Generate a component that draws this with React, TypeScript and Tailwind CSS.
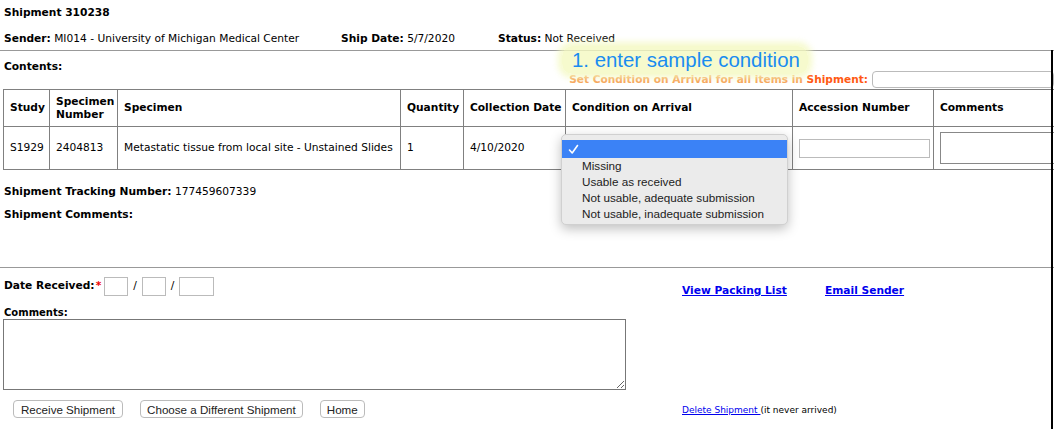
import React from "react";

const cell = "border border-[#808080] px-[6px] align-middle";

export default function App() {
  return (
    <div className="relative w-[1054px] h-[429px] overflow-hidden bg-white text-[10.65px] text-black font-['DejaVu_Sans',Verdana,sans-serif]">
      <div className="h-[26px] flex items-center px-[4px] font-bold">Shipment 310238</div>
      <div className="h-[24px] flex items-center px-[4px] pt-[2px]">
        <div className="w-[337px]">
          <b>Sender:</b> MI014 - University of Michigan Medical Center
        </div>
        <div className="w-[157px]">
          <b>Ship Date:</b> 5/7/2020
        </div>
        <div>
          <b>Status:</b> Not Received
        </div>
      </div>
      <div className="border-t border-[#999]" />

      <div className="h-[38px] flex items-start justify-between pl-[4px]">
        <div className="pt-[8px] font-bold">Contents:</div>
        <div className="flex items-end gap-[4px] pt-[20px]">
          <span className="font-bold text-[10.6px] text-[#f7a257]">
            Set Condition on Arrival for all items in <span className="text-[#ff5a14]">Shipment:</span>
          </span>
          <input className="w-[182px] h-[17px] border border-[#bbb] rounded-[4px] bg-white" />
        </div>
      </div>

      <table className="ml-[3px] border-collapse table-fixed w-[1060px]">
        <colgroup>
          <col className="w-[46px]" />
          <col className="w-[68px]" />
          <col className="w-[283px]" />
          <col className="w-[63px]" />
          <col className="w-[102px]" />
          <col className="w-[227px]" />
          <col className="w-[141px]" />
          <col />
        </colgroup>
        <thead>
          <tr className="h-[37px] text-left font-bold">
            <th className={cell}>Study</th>
            <th className={cell + " leading-[13px]"}>
              Specimen
              <br />
              Number
            </th>
            <th className={cell}>Specimen</th>
            <th className={cell}>Quantity</th>
            <th className={cell + " whitespace-nowrap"}>Collection Date</th>
            <th className={cell}>Condition on Arrival</th>
            <th className={cell}>Accession Number</th>
            <th className={cell}>Comments</th>
          </tr>
        </thead>
        <tbody>
          <tr className="h-[43px]">
            <td className={cell}>S1929</td>
            <td className={cell}>2404813</td>
            <td className={cell + " whitespace-nowrap"}>Metastatic tissue from local site - Unstained Slides</td>
            <td className={cell}>1</td>
            <td className={cell}>4/10/2020</td>
            <td className={cell}></td>
            <td className={cell + " px-[4px]"}>
              <input className="w-[131px] h-[19px] border border-[#bbb] bg-white block" />
            </td>
            <td className={cell + " px-[5px]"}>
              <div className="w-[120px] h-[32px] border border-[#888] bg-white" />
            </td>
          </tr>
        </tbody>
      </table>

      <div className="px-[4px] pt-[14px] h-[37px]">
        <b>Shipment Tracking Number:</b> 177459607339
      </div>
      <div className="px-[4px] font-bold h-[60px]">Shipment Comments:</div>
      <div className="border-t border-[#999]" />

      <div className="flex items-center h-[36px] px-[4px]">
        <div className="flex items-center w-[678px]">
          <b>Date Received:</b>
          <span className="text-[#e00] font-bold ml-[1px]">*</span>
          <input className="ml-[3px] w-[24px] h-[19px] border border-[#bbb]" />
          <span className="mx-[5px]">/</span>
          <input className="w-[24px] h-[19px] border border-[#bbb]" />
          <span className="mx-[5px]">/</span>
          <input className="w-[35px] h-[19px] border border-[#bbb]" />
        </div>
        <a href="#" className="font-bold text-[#0000ee] underline pt-[10px] w-[143px]">
          View Packing List
        </a>
        <a href="#" className="font-bold text-[#0000ee] underline pt-[10px]">
          Email Sender
        </a>
      </div>

      <div className="px-[4px] pt-[3px] font-bold text-[10px] leading-[12px]">Comments:</div>
      <div className="px-[3px]">
        <textarea className="block w-[623px] h-[71px] border border-[#777] bg-white resize" />
      </div>

      <div className="flex items-center h-[37px] px-[13px]">
        <div className="flex gap-[17px] w-[669px] font-['Liberation_Sans',Arial,sans-serif] text-[11.6px]">
          <button className="h-[18px] px-[7px] border border-[#bbb] rounded-[4px] bg-white text-[#222]">Receive Shipment</button>
          <button className="h-[18px] px-[6px] border border-[#bbb] rounded-[4px] bg-white text-[#222]">Choose a Different Shipment</button>
          <button className="h-[18px] px-[6px] border border-[#bbb] rounded-[4px] bg-white text-[#222]">Home</button>
        </div>
        <div className="text-[9px] pt-[4px]">
          <a href="#" className="text-[#0000ee] underline">Delete Shipment </a>(it never arrived)
        </div>
      </div>

      {/* hint bubble */}
      <div className="absolute left-[562px] top-[46px] w-[246px] h-[28px] rounded-[10px] bg-[#f4f9c0]/80 shadow-[0_0_6px_4px_rgba(244,249,192,0.8)] flex items-center pl-[10px] text-[20.4px] text-[#1a8cf0] font-['Liberation_Sans',Arial,sans-serif]">
        1. enter sample condition
      </div>

      {/* open select menu */}
      <div className="absolute left-[561px] top-[134px] w-[227px] h-[91px] rounded-[5px] bg-[#ebebeb] border border-[#d0d0d0] shadow-[0_4px_12px_rgba(0,0,0,0.25)] pt-[5px] font-['Liberation_Sans',Arial,sans-serif] text-[11.7px] text-[#222]">
        <div className="h-[18px] bg-[#3b82f6] text-white flex items-center pl-[6px]">
          <svg width="11" height="11" viewBox="0 0 11 11" fill="none" stroke="white" strokeWidth="1.6" strokeLinecap="round" strokeLinejoin="round">
            <path d="M1.5 6 L4.2 9 L9.5 1.5" />
          </svg>
        </div>
        {["Missing", "Usable as received", "Not usable, adequate submission", "Not usable, inadequate submission"].map((o) => (
          <div key={o} className="h-[16px] leading-[16px] pl-[20px]">
            {o}
          </div>
        ))}
      </div>

      {/* window edge */}
      <div className="absolute right-[1px] top-[50px] bottom-0 w-[2px] bg-black" />
    </div>
  );
}
